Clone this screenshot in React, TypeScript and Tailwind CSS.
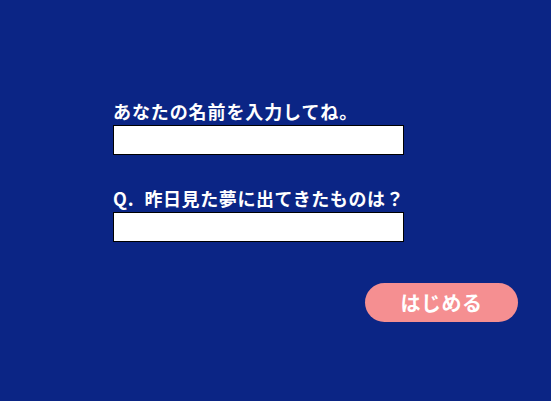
import React, { useState } from 'react';

const font = { fontFamily: '"Noto Sans CJK JP", "Noto Sans", sans-serif' };

export default function App() {
  const [name, setName] = useState('');
  const [dream, setDream] = useState('');

  return (
    <div className="w-[551px] h-[401px] bg-[#0b2585] overflow-hidden" style={font}>
      <div className="pl-[113px] pt-[99px] w-[404px]">
        <label className="block text-[18px] leading-[24px] font-bold text-white tracking-[0.9px]">
          あなたの名前を入力してね。
        </label>
        <input
          type="text"
          value={name}
          onChange={(e) => setName(e.target.value)}
          className="block mt-[2px] w-[291px] h-[30px] bg-white border border-black outline-none px-1 text-sm"
        />

        <label className="block mt-[31px] text-[18px] leading-[24px] font-bold text-white tracking-[0.6px] whitespace-nowrap">
          <span className="tracking-[1px] mr-[5px]">Q.</span> 昨日見た夢に出てきたものは？
        </label>
        <input
          type="text"
          value={dream}
          onChange={(e) => setDream(e.target.value)}
          className="block mt-[2px] w-[291px] h-[30px] bg-white border border-black outline-none px-1 text-sm"
        />
      </div>
      <div className="flex justify-end pr-[33px] mt-[41px]">
        <button className="w-[153px] h-[39px] rounded-full bg-[#f58f91] text-white text-[20px] font-bold tracking-[0.5px]">
          はじめる
        </button>
      </div>
    </div>
  );
}
